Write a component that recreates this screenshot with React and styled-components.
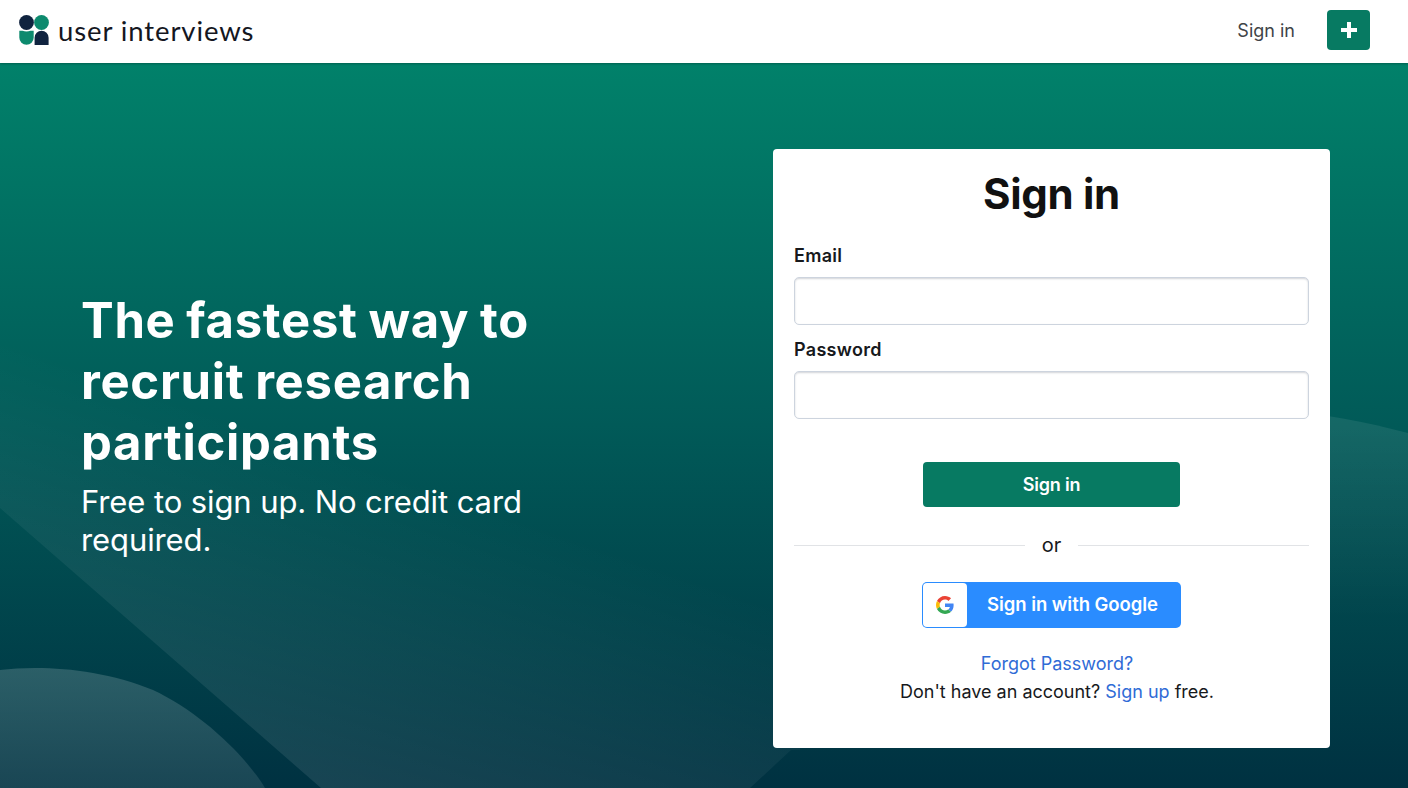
import React from "react";
import styled, { createGlobalStyle } from "styled-components";

const Global = createGlobalStyle`
  html, body { margin: 0; padding: 0; height: 100%; }
  body { font-family: "Inter", "Noto Sans", sans-serif; background: #fff; overflow: hidden; }
  * { box-sizing: border-box; }
`;

const Page = styled.div`
  width: 1408px;
  height: 788px;
  display: flex;
  flex-direction: column;
`;

const Header = styled.header`
  height: 63px;
  flex: none;
  background: #fff;
  display: flex;
  align-items: center;
  justify-content: space-between;
  padding: 0 38px 3px 19px;
  position: relative;
  z-index: 2;
  box-shadow: 0 1px 2px rgba(0, 0, 0, 0.25);
`;

const Brand = styled.a`
  display: flex;
  align-items: center;
  gap: 9px;
`;

const BrandName = styled.span`
  font-family: "Lato", sans-serif;
  font-size: 27.5px;
  font-weight: 400;
  letter-spacing: 0.9px;
  color: #14171f;
  line-height: 32px;
  padding-top: 1px;
`;

const Nav = styled.nav`
  display: flex;
  align-items: center;
  gap: 32px;
`;

const NavLink = styled.a`
  font-size: 18px;
  font-weight: 400;
  letter-spacing: 0;
  color: #3f4347;
`;

const PlusButton = styled.button`
  width: 43px;
  height: 40px;
  border: none;
  border-radius: 4px;
  background: #077a62;
  display: flex;
  align-items: center;
  justify-content: center;
  padding: 0;
`;

const Hero = styled.main`
  flex: 1;
  position: relative;
  overflow: hidden;
  display: flex;
  align-items: flex-start;
  justify-content: space-between;
  padding: 86px 78px 0 81px;
  background: linear-gradient(180deg, #01816a 0%, #015a58 50%, #003141 100%);
`;

const Backdrop = styled.svg`
  position: absolute;
  inset: 0;
  width: 100%;
  height: 100%;
`;

const Pitch = styled.section`
  position: relative;
  width: 470px;
  margin-top: 141px;
  color: #fff;
`;

const Headline = styled.h1`
  margin: 0;
  font-size: 49px;
  line-height: 61px;
  font-weight: 700;
  letter-spacing: 0.7px;
  word-spacing: -1.5px;
`;

const Subhead = styled.p`
  margin: 10px 0 0;
  font-size: 31px;
  line-height: 38px;
  font-weight: 400;
  letter-spacing: -0.1px;
`;

const Card = styled.section`
  position: relative;
  width: 557px;
  height: 599px;
  background: #fff;
  border-radius: 4px;
  padding: 21px 21px 0;
  display: flex;
  flex-direction: column;
`;

const Title = styled.h2`
  margin: 0 0 26px;
  text-align: center;
  font-size: 42px;
  line-height: 48px;
  font-weight: 700;
  letter-spacing: -0.3px;
  color: #111;
`;

const Label = styled.label`
  display: block;
  font-size: 18px;
  line-height: 24px;
  font-weight: 600;
  letter-spacing: 0.3px;
  color: #17191c;
  margin-bottom: 9px;
`;

const Input = styled.input`
  display: block;
  width: 100%;
  height: 48px;
  background: #fff;
  border: 1.5px solid #cdd4de;
  border-radius: 5px;
  box-shadow: inset 0 1px 2px rgba(30, 40, 60, 0.2);
  margin-bottom: 13px;
  outline: none;
`;

const SubmitButton = styled.button`
  align-self: center;
  width: 257px;
  height: 45px;
  margin-top: 30px;
  border: none;
  border-radius: 4px;
  background: #077a62;
  color: #fff;
  font-family: inherit;
  font-size: 18px;
  font-weight: 600;
  letter-spacing: -0.2px;
`;

const Divider = styled.div`
  display: flex;
  align-items: center;
  gap: 17px;
  margin-top: 24px;
  font-size: 20px;
  line-height: 28px;
  color: #17191c;
  &::before, &::after {
    content: "";
    flex: 1;
    height: 1px;
    background: #e1e3e6;
  }
`;

const GoogleButton = styled.button`
  align-self: center;
  width: 259px;
  height: 46px;
  margin-top: 23px;
  padding: 1px;
  border: none;
  border-radius: 5px;
  background: #2a8cff;
  display: flex;
  align-items: stretch;
  color: #fff;
  font-family: inherit;
  font-size: 18.5px;
  font-weight: 600;
  letter-spacing: -0.05px;
`;

const GoogleMark = styled.span`
  width: 44px;
  background: #fff;
  border-radius: 4px;
  display: flex;
  align-items: center;
  justify-content: center;
  flex: none;
`;

const GoogleText = styled.span`
  flex: 1;
  display: flex;
  align-items: center;
  justify-content: center;
  padding: 0 2px 3px 0;
`;

const Links = styled.div`
  margin-top: 22px;
  padding-left: 11px;
  text-align: center;
  font-size: 18px;
  line-height: 28px;
  letter-spacing: 0;
  color: #17191c;
`;

const TextLink = styled.a`
  color: #2f6bd6;
`;

const Plus = () => (
  <svg width="16" height="16" viewBox="0 0 16 16" aria-hidden="true">
    <path d="M8 0v16M0 8h16" stroke="#fff" strokeWidth="4" />
  </svg>
);

const Logo = () => (
  <svg width="30" height="30" viewBox="0 0 30 30" aria-hidden="true">
    <circle cx="7.5" cy="7.5" r="7.4" fill="#10233f" />
    <circle cx="22.5" cy="7.5" r="7.4" fill="#0d8a6e" />
    <path d="M0.3 15.8H3.5Q7.5 17 11.5 15.8H14.7V22.6A7.2 7.2 0 0 1 0.3 22.6Z" fill="#0d8a6e" />
    <path d="M15.6 30V22.8A7 7 0 0 1 29.6 22.8V30Z" fill="#10233f" />
  </svg>
);

const GoogleG = () => (
  <svg width="18" height="18" viewBox="0 0 48 48" aria-hidden="true">
    <path fill="#EA4335" d="M24 9.5c3.54 0 6.71 1.22 9.21 3.6l6.85-6.85C35.9 2.38 30.47 0 24 0 14.62 0 6.51 5.38 2.56 13.22l7.98 6.19C12.43 13.72 17.74 9.5 24 9.5z" />
    <path fill="#4285F4" d="M46.98 24.55c0-1.57-.15-3.09-.38-4.55H24v9.02h12.94c-.58 2.96-2.26 5.48-4.78 7.18l7.73 6c4.51-4.18 7.09-10.36 7.09-17.65z" />
    <path fill="#FBBC05" d="M10.53 28.59c-.48-1.45-.76-2.99-.76-4.59s.27-3.14.76-4.59l-7.98-6.19C.92 16.46 0 20.12 0 24c0 3.88.92 7.54 2.56 10.78l7.97-6.19z" />
    <path fill="#34A853" d="M24 48c6.48 0 11.93-2.13 15.89-5.81l-7.73-6c-2.15 1.45-4.92 2.3-8.16 2.3-6.26 0-11.57-4.22-13.47-9.91l-7.98 6.19C6.51 42.62 14.62 48 24 48z" />
  </svg>
);

export default function App() {
  return (
    <Page>
      <Global />
      <Header>
        <Brand>
          <Logo />
          <BrandName>user interviews</BrandName>
        </Brand>
        <Nav>
          <NavLink>Sign in</NavLink>
          <PlusButton aria-label="Add"><Plus /></PlusButton>
        </Nav>
      </Header>
      <Hero>
        <Backdrop viewBox="0 63 1408 725" preserveAspectRatio="none" aria-hidden="true">
          <defs>
            <linearGradient id="veil" gradientUnits="userSpaceOnUse" x1="300" y1="440" x2="180" y2="788">
              <stop offset="0" stopColor="#fff" stopOpacity="0" />
              <stop offset="0.4" stopColor="#fff" stopOpacity="0.045" />
              <stop offset="1" stopColor="#fff" stopOpacity="0.105" />
            </linearGradient>
            <linearGradient id="veilRight" gradientUnits="userSpaceOnUse" x1="1370" y1="425" x2="1370" y2="620">
              <stop offset="0" stopColor="#fff" stopOpacity="0.08" />
              <stop offset="1" stopColor="#fff" stopOpacity="0" />
            </linearGradient>
            <linearGradient id="dome" gradientUnits="userSpaceOnUse" x1="0" y1="667" x2="0" y2="788">
              <stop offset="0" stopColor="#fff" stopOpacity="0.17" />
              <stop offset="1" stopColor="#fff" stopOpacity="0.1" />
            </linearGradient>
          </defs>
          <path d="M0 345C220 390 500 450 800 512V750H791L750 788H321L0 508Z" fill="url(#veil)" />
          <path d="M1240 405C1300 410 1360 420 1408 433V620H1240Z" fill="url(#veilRight)" />
          <path d="M0 670C40 665 100 668 153 690C200 712 245 755 265 788H0Z" fill="url(#dome)" />
        </Backdrop>
        <Pitch>
          <Headline>The fastest way to recruit research participants</Headline>
          <Subhead>Free to sign up. No credit card required.</Subhead>
        </Pitch>
        <Card>
          <Title>Sign in</Title>
          <Label htmlFor="email">Email</Label>
          <Input id="email" type="email" />
          <Label htmlFor="password">Password</Label>
          <Input id="password" type="password" />
          <SubmitButton>Sign in</SubmitButton>
          <Divider>or</Divider>
          <GoogleButton>
            <GoogleMark><GoogleG /></GoogleMark>
            <GoogleText>Sign in with Google</GoogleText>
          </GoogleButton>
          <Links>
            <div><TextLink>Forgot Password?</TextLink></div>
            <div>Don't have an account? <TextLink>Sign up</TextLink> free.</div>
          </Links>
        </Card>
      </Hero>
    </Page>
  );
}
